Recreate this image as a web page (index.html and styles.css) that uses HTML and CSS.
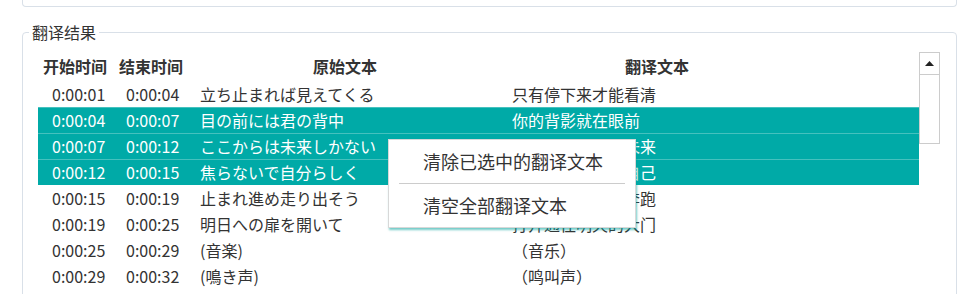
FILE: index.html
```html
<!DOCTYPE html>
<html lang="zh-CN">
<head>
  <meta charset="UTF-8">
  <title>翻译结果</title>
  <link rel="stylesheet" href="styles.css">
</head>
<body>

  <!-- Upper panel (cut off) -->
  <div class="top-panel"></div>

  <!-- Result box -->
  <fieldset class="result-box">
    <legend>翻译结果</legend>

    <div class="grid-wrap">
      <table class="sub-table">
        <colgroup>
          <col class="c-start">
          <col class="c-end">
          <col class="c-src">
          <col class="c-dst">
          <col>
        </colgroup>
        <thead>
          <tr>
            <th>开始时间</th>
            <th>结束时间</th>
            <th>原始文本</th>
            <th>翻译文本</th>
            <th></th>
          </tr>
        </thead>
        <tbody>
          <tr><td>0:00:01</td><td>0:00:04</td><td>立ち止まれば見えてくる</td><td>只有停下来才能看清</td><td></td></tr>
          <tr class="selected"><td>0:00:04</td><td>0:00:07</td><td>目の前には君の背中</td><td>你的背影就在眼前</td><td></td></tr>
          <tr class="selected"><td>0:00:07</td><td>0:00:12</td><td>ここからは未来しかない</td><td>从这里开始只有未来</td><td></td></tr>
          <tr class="selected"><td>0:00:12</td><td>0:00:15</td><td>焦らないで自分らしく</td><td>不要着急做回你自己</td><td></td></tr>
          <tr><td>0:00:15</td><td>0:00:19</td><td>止まれ進め走り出そう</td><td>停下来前进向前奔跑</td><td></td></tr>
          <tr><td>0:00:19</td><td>0:00:25</td><td>明日への扉を開いて</td><td>打开通往明天的大门</td><td></td></tr>
          <tr><td>0:00:25</td><td>0:00:29</td><td>(音楽)</td><td>（音乐）</td><td></td></tr>
          <tr><td>0:00:29</td><td>0:00:32</td><td>(鳴き声)</td><td>（鸣叫声）</td><td></td></tr>
        </tbody>
      </table>

      <div class="scrollbar">
        <div class="scroll-up">
          <svg width="9" height="5" viewBox="0 0 9 5"><path d="M0 5 L4.5 0 L9 5 Z" fill="#222"/></svg>
        </div>
        <div class="scroll-track"></div>
      </div>
    </div>
  </fieldset>

  <!-- Right-click menu -->
  <div class="context-menu">
    <div class="menu-item">清除已选中的翻译文本</div>
    <div class="menu-sep"></div>
    <div class="menu-item">清空全部翻译文本</div>
  </div>

</body>
</html>
```

FILE: styles.css
```css
body {
  margin: 0;
  height: 294px;
  overflow: hidden;
  background-color: #ffffff;
  font-family: "Noto Sans CJK SC", "Noto Sans", sans-serif;
  color: #333333;
}

.top-panel {
  height: 7px;
  margin: 0 23px 0 22px;
  border: 1px solid #d9e0e8;
  border-top: none;
  border-radius: 0 0 4px 4px;
  box-sizing: border-box;
}

.result-box {
  margin: 14px 23px 0 22px;
  padding: 0 0 40px 15px;
  border: 1px solid #d9e0e8;
  border-radius: 4px;
  min-width: 0;
}

.result-box legend {
  margin-left: -9px;
  padding: 0 3px;
  font-size: 16px;
  line-height: 22px;
  color: #333333;
}

.grid-wrap {
  display: flex;
  align-items: flex-start;
  margin-top: 8px;
}

.sub-table {
  width: 881px;
  border-collapse: collapse;
  table-layout: fixed;
  font-size: 16px;
}

.c-start { width: 74px; }
.c-end { width: 78px; }
.c-src { width: 310px; }
.c-dst { width: 314px; }

.sub-table th {
  height: 30px;
  padding: 0;
  font-weight: bold;
  text-align: center;
  vertical-align: middle;
  color: #333333;
}

.sub-table td {
  height: 26px;
  padding: 0;
  white-space: nowrap;
  overflow: hidden;
  vertical-align: middle;
  line-height: 26px;
}

.sub-table td:nth-child(1),
.sub-table td:nth-child(2) {
  padding-left: 14px;
}

.sub-table td:nth-child(3) {
  padding-left: 10px;
}

.sub-table td:nth-child(4) {
  padding-left: 12px;
}

.sub-table tr.selected td {
  background-color: #00aaa7;
  color: #ffffff;
  box-shadow: inset 0 1px 0 #45c1be;
}

.scrollbar {
  width: 21px;
  height: 92px;
  margin-top: 1px;
  border: 1px solid #cccccc;
  box-sizing: border-box;
  display: flex;
  flex-direction: column;
}

.scroll-up {
  height: 21px;
  border-bottom: 1px solid #cccccc;
  display: flex;
  align-items: center;
  justify-content: center;
}

.scroll-track {
  flex: 1;
}

.context-menu {
  position: absolute;
  left: 388px;
  top: 139px;
  width: 248px;
  background-color: #ffffff;
  border: 1px solid #d8d8d8;
  box-sizing: border-box;
  box-shadow: 1px 2px 2px rgba(0, 160, 155, 0.55);
  font-size: 18px;
  color: #333333;
}

.menu-item {
  height: 43px;
  line-height: 43px;
  padding-left: 34px;
}

.menu-sep {
  height: 1px;
  margin: 0 10px;
  background-color: #cccccc;
}
```
